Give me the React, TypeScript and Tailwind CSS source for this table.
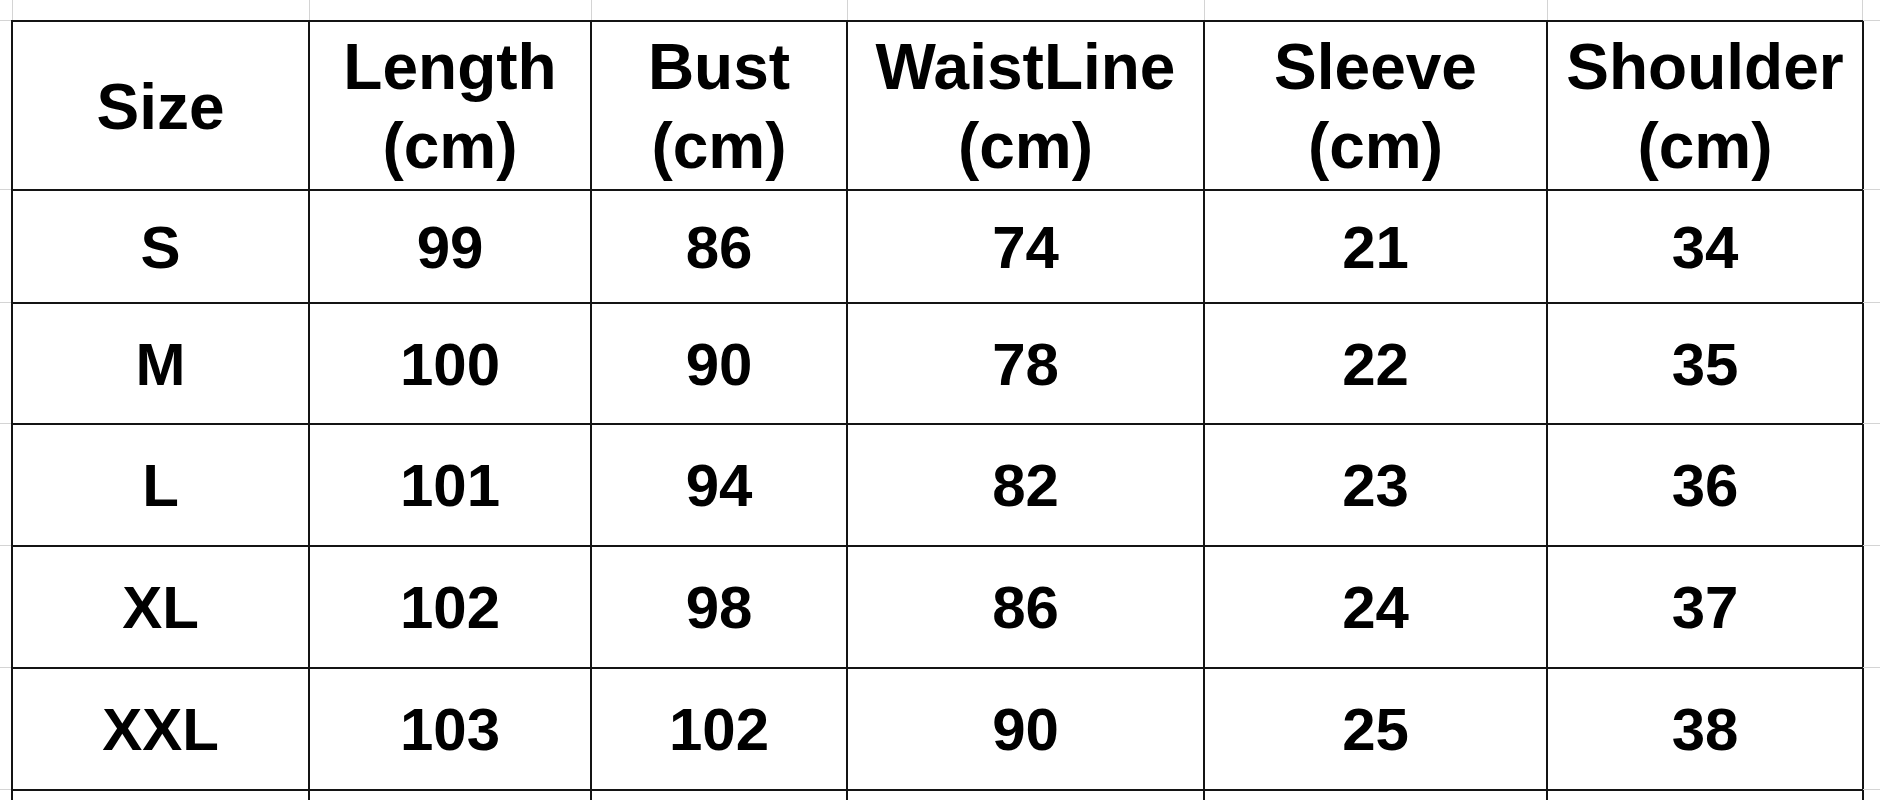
import React from "react";

const colWidths = [297, 282, 256, 357, 343, 316];

const headers: [string, string?][] = [
  ["Size"],
  ["Length", "(cm)"],
  ["Bust", "(cm)"],
  ["WaistLine", "(cm)"],
  ["Sleeve", "(cm)"],
  ["Shoulder", "(cm)"],
];

const rows: { size: string; values: number[]; h: string }[] = [
  { size: "S", values: [99, 86, 74, 21, 34], h: "h-[113px]" },
  { size: "M", values: [100, 90, 78, 22, 35], h: "h-[121px]" },
  { size: "L", values: [101, 94, 82, 23, 36], h: "h-[122px]" },
  { size: "XL", values: [102, 98, 86, 24, 37], h: "h-[122px]" },
  { size: "XXL", values: [103, 102, 90, 25, 38], h: "h-[122px]" },
];

// gray spreadsheet gridlines next to the table, one per row
const gutterRows = ["h-[169px]", "h-[113px]", "h-[121px]", "h-[122px]", "h-[122px]", "h-[122px]", "h-[122px]"];

function Gutter({ className = "" }: { className?: string }) {
  return (
    <div className={`flex flex-col border-t border-[#d4d4d4] ${className}`}>
      {gutterRows.map((h, i) => (
        <div key={i} className={`${h} border-b border-[#d4d4d4]`} />
      ))}
    </div>
  );
}

export default function App() {
  return (
    <div
      className="w-[1880px] h-[800px] overflow-hidden bg-white flex flex-col text-black"
      style={{ fontFamily: '"Liberation Sans", Arial, sans-serif' }}
    >
      {/* top strip of the sheet above the table */}
      <div className="h-[21px] flex shrink-0">
        <div className="w-[12px] shrink-0" />
        {colWidths.map((w, i) => (
          <div
            key={i}
            className={`shrink-0 border-l border-[#d4d4d4] ${i === colWidths.length - 1 ? "border-r" : ""}`}
            style={{ width: w }}
          />
        ))}
        <div className="flex-1" />
      </div>

      <div className="flex -mt-px">
        <Gutter className="w-[12px] shrink-0 -mr-px" />

        <table className="table-fixed border-collapse shrink-0 w-[1853px]">
          <colgroup>
            {colWidths.map((w, i) => (
              <col key={i} style={{ width: w }} />
            ))}
          </colgroup>
          <thead>
            <tr className="h-[169px]">
              {headers.map(([a, b], i) => (
                <th
                  key={i}
                  className="border-2 border-[#141414] p-0 pt-[3px] text-center align-middle font-bold text-[64px] leading-[79px]"
                >
                  <div>{a}</div>
                  {b && <div>{b}</div>}
                </th>
              ))}
            </tr>
          </thead>
          <tbody>
            {rows.map((r) => (
              <tr key={r.size} className={r.h}>
                <td className="border-2 border-[#141414] p-0 pt-[2px] text-center align-middle font-bold text-[60px] leading-none">
                  {r.size}
                </td>
                {r.values.map((v, i) => (
                  <td
                    key={i}
                    className="border-2 border-[#141414] p-0 pt-[2px] text-center align-middle font-bold text-[60px] leading-none"
                  >
                    {v}
                  </td>
                ))}
              </tr>
            ))}
            <tr className="h-[122px]">
              {colWidths.map((_, i) => (
                <td key={i} className="border-2 border-[#141414] p-0" />
              ))}
            </tr>
          </tbody>
        </table>

        <Gutter className="flex-1 -ml-px" />
      </div>
    </div>
  );
}
